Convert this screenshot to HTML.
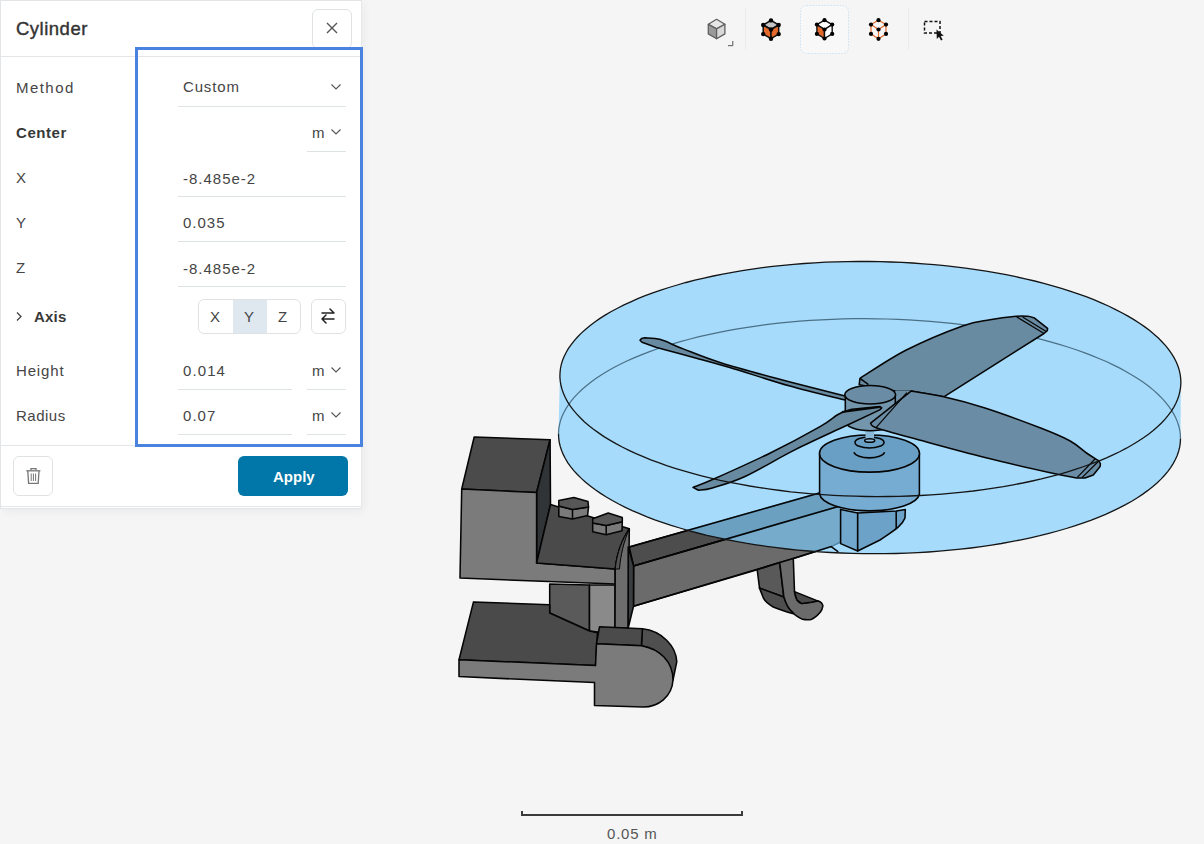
<!DOCTYPE html>
<html><head><meta charset="utf-8">
<style>
html,body{margin:0;padding:0;}
body{width:1204px;height:844px;overflow:hidden;position:relative;background:#f5f5f5;font-family:"Liberation Sans",sans-serif;}
.a{position:absolute;}
.t{position:absolute;white-space:nowrap;line-height:20px;font-size:15px;color:#454545;letter-spacing:0.85px;}
.b{font-weight:700;color:#383838;letter-spacing:0.2px;}
.ul{position:absolute;height:1px;background:#dde2e5;}
.chev{position:absolute;width:10px;height:6px;}
#panel{position:absolute;left:0;top:0;width:360px;height:507px;background:#fff;border:1px solid #e1e5e8;border-right:none;box-shadow:3px 3px 8px rgba(0,0,0,0.045);}
</style></head>
<body>
<svg class="a" style="left:0;top:0" width="1204" height="844" viewBox="0 0 1204 844">
<g stroke="#050505" stroke-width="1.55" stroke-linejoin="round">
<!-- upper L block -->
<polygon points="474.2,437 550.1,439.7 536.6,492.5 461.7,489" fill="#4b4b4b"/>
<polygon points="550.1,439.7 550.5,504.5 536.6,563 536.6,492.5" fill="#303437"/>
<polygon points="461.7,489 536.6,492.5 536.6,563 615.2,569 615.2,584.1 460,578.1" fill="#7b7b7b"/>
<path d="M550.5,504.5 L629.3,528.7 C622,540 617,552 615.2,569 L536.6,563 Z" fill="#4a4a4a"/>
<!-- bolts -->
<polygon points="558.8,506 558.8,516.6 572.5,519 587.6,515.6 588.5,507 572.5,509.5" fill="#7a7a7a"/>
<polygon points="558.8,500.5 573.9,497.5 588,501.5 588.5,507 572.5,509.5 558.8,506" fill="#575757"/>
<line x1="572.5" y1="509.5" x2="572.5" y2="519"/>
<polygon points="592.7,523 592.7,531.8 606.2,534.8 622,530.7 622.3,521.7 606.2,525.5" fill="#7a7a7a"/>
<polygon points="592.7,518.7 608.2,513 622.3,517.6 622.3,521.7 606.2,525.5 592.7,523" fill="#575757"/>
<line x1="606.2" y1="525.5" x2="606.2" y2="534.8"/>
<!-- vertical post under upper block -->
<polygon points="549.7,584 589.5,585 589.5,631 549.7,613" fill="#5a5a5a"/>
<polygon points="589.5,585 615,585 615,628 597.5,632 589.5,631" fill="#8a8a8a"/>
<!-- tall post to hinge -->
<path d="M629.3,528.7 L628.2,628 L615,628 L615.2,569 C617,552 622,540 629.3,528.7 Z" fill="#6d6d6d"/>
<path d="M629.3,528.7 C622,540 617,552 615.2,569 L619.5,569 C620.5,555 624,541 629.3,528.7 Z" fill="#545454" stroke-width="1"/>
<!-- lower plate -->
<polygon points="473.5,601.9 549.7,604.8 549.7,613 589.5,631 597.5,632.8 595.5,665.6 459,659.7" fill="#4a4a4a"/>
<!-- hinge -->
<path d="M642.4,628.8 C662,631 676,646 676.8,661.7 L673,680 C672,664 660,648 641.4,645.7 Z" fill="#4f4f4f"/>
<polygon points="599.5,626.8 642.4,628.8 641.4,645.7 596.5,643.7" fill="#4b4b4b"/>
<path d="M596.5,643.7 L641.4,645.7 C660,649 673,662 673,680 C672,697 658,707 643.3,707.1 L594.5,705.5 L594.5,682.6 L459,676.6 L459,659.7 L595.5,665.6 Z" fill="#7b7b7b"/>
<!-- horizontal arm -->
<polygon points="629.2,547 830,490 840,506 633.6,566" fill="#4d4d4d"/>
<polygon points="633.6,566 840,506 845,540 831.2,546.6 779.2,563.1 633.5,606.3" fill="#6b6b6b"/>
<polygon points="628.2,547 633.6,566 633.5,606.3 628.2,628" fill="#3a3e40"/>
<!-- hook -->
<polygon points="757.2,569.7 779.7,562.6 783.8,597 759.5,588.1" fill="#595959"/>
<path d="M759.5,588.1 L783.8,597 C786,604 790,610 794.5,614.1 C787,612 780,610 773.2,607 C768,604 765,601 763.7,598.7 Z" fill="#4e4e4e"/>
<path d="M779.7,562.6 L793.3,558.4 L794.5,591.6 C795,596 796,598 796.9,599.9 C798,602 800,603 801.6,603.5 L811.1,602.3 C814,601.5 816,601 818.2,601.1 C821,602 822.5,604 822.9,605.8 C822.5,608 822,610 820.6,611.8 C818,615 815,618 811.1,619.5 C808,620 804,619.5 801.6,618.9 C798,617 795,615 793.3,612.9 C790,610 788.5,608 787.4,605.8 C785.5,602 784.5,599 783.8,596.4 Z" fill="#6b6b6b"/>
<path d="M794.5,591.6 L818.2,601.1 L811.1,602.3 L801.6,603.5 L796.9,599.9 Z" fill="#4a4a4a"/>
</g>
<!-- cylinder translucent fill -->
<path d="M559.9,375.2 560.2,371.1 560.8,366.9 561.8,362.8 563.2,358.7 565.0,354.6 567.2,350.6 569.7,346.6 572.6,342.6 575.9,338.7 579.6,334.8 583.6,331.0 588.0,327.2 592.7,323.6 597.8,319.9 603.2,316.4 608.9,312.9 615.0,309.5 621.4,306.2 628.1,303.0 635.1,299.9 642.4,296.9 649.9,294.0 657.8,291.1 665.9,288.4 674.3,285.9 682.9,283.4 691.7,281.0 700.8,278.8 710.1,276.7 719.6,274.7 729.3,272.9 739.1,271.1 749.1,269.6 759.3,268.1 769.6,266.8 780.0,265.6 790.5,264.6 801.2,263.7 811.9,263.0 822.7,262.4 833.6,261.9 844.5,261.6 855.4,261.5 866.4,261.5 877.3,261.6 888.3,261.9 899.2,262.3 910.1,262.9 920.9,263.6 931.7,264.4 942.4,265.5 953.0,266.6 963.5,267.9 973.9,269.3 984.2,270.9 994.3,272.6 1004.3,274.4 1014.1,276.3 1023.7,278.4 1033.1,280.6 1042.4,283.0 1051.4,285.4 1060.2,288.0 1068.7,290.7 1077.0,293.5 1085.1,296.4 1092.9,299.4 1100.4,302.5 1107.6,305.7 1114.5,308.9 1121.1,312.3 1127.4,315.8 1133.4,319.3 1139.1,322.9 1144.4,326.6 1149.4,330.4 1154.0,334.2 1158.3,338.0 1162.2,341.9 1165.8,345.9 1169.0,349.9 1171.8,353.9 1174.2,358.0 1176.3,362.1 1178.0,366.2 1179.3,370.4 1180.2,374.5 1180.7,378.6 1180.9,382.8 L1180.5,438.6 1180.3,442.8 1179.7,446.9 1178.7,451.0 1177.3,455.2 1175.5,459.2 1173.3,463.3 1170.8,467.3 1167.9,471.3 1164.6,475.2 1161.0,479.1 1157.0,482.9 1152.6,486.7 1147.9,490.4 1142.8,494.1 1137.4,497.7 1131.7,501.2 1125.6,504.6 1119.3,507.9 1112.6,511.1 1105.6,514.3 1098.3,517.3 1090.7,520.3 1082.8,523.1 1074.7,525.9 1066.3,528.5 1057.7,531.0 1048.9,533.4 1039.8,535.7 1030.5,537.8 1021.0,539.8 1011.3,541.7 1001.5,543.5 991.5,545.1 981.3,546.6 971.0,548.0 960.5,549.2 950.0,550.2 939.3,551.2 928.6,552.0 917.8,552.6 906.9,553.1 896.0,553.5 885.0,553.7 874.1,553.7 863.1,553.6 852.1,553.4 841.2,553.0 830.3,552.5 819.4,551.8 808.6,551.0 797.9,550.1 787.2,549.0 776.7,547.7 766.3,546.3 756.0,544.8 745.8,543.2 735.9,541.4 726.0,539.5 716.4,537.4 706.9,535.3 697.7,533.0 688.6,530.6 679.8,528.0 671.2,525.4 662.9,522.6 654.8,519.8 647.0,516.8 639.5,513.7 632.2,510.6 625.3,507.3 618.7,504.0 612.3,500.5 606.3,497.0 600.6,493.4 595.3,489.8 590.3,486.1 585.6,482.3 581.3,478.4 577.4,474.5 573.8,470.6 570.6,466.6 567.7,462.6 565.3,458.5 563.2,454.4 561.5,450.3 560.2,446.2 559.2,442.1 558.7,437.9 558.5,433.8 Z" fill="#7bcdfe" fill-opacity="0.655" stroke="none"/>
<!-- arm edges redrawn -->
<g stroke="#050505" stroke-width="1.55" fill="none">
<path d="M629.2,547 L830,490 M633.6,566 L840,506 M633.5,606.3 L779.7,562.6 M793.3,558.4 L831.2,546.6 L838.3,551.9"/>
</g>
<!-- back half of bottom ellipse -->
<path d="M558.5,433.8 558.7,429.6 559.3,425.5 560.3,421.4 561.7,417.2 563.5,413.2 565.7,409.1 568.2,405.1 571.1,401.1 574.4,397.2 578.0,393.3 582.0,389.5 586.4,385.7 591.1,382.0 596.2,378.3 601.6,374.7 607.3,371.2 613.4,367.8 619.7,364.5 626.4,361.3 633.4,358.1 640.7,355.1 648.3,352.1 656.2,349.3 664.3,346.5 672.7,343.9 681.3,341.4 690.1,339.0 699.2,336.7 708.5,334.6 718.0,332.6 727.7,330.7 737.5,328.9 747.5,327.3 757.7,325.8 768.0,324.4 778.5,323.2 789.0,322.2 799.7,321.2 810.4,320.4 821.2,319.8 832.1,319.3 843.0,318.9 854.0,318.7 864.9,318.7 875.9,318.8 886.9,319.0 897.8,319.4 908.7,319.9 919.6,320.6 930.4,321.4 941.1,322.3 951.8,323.4 962.3,324.7 972.7,326.1 983.0,327.6 993.2,329.2 1003.1,331.0 1013.0,332.9 1022.6,335.0 1032.1,337.1 1041.3,339.4 1050.4,341.8 1059.2,344.4 1067.8,347.0 1076.1,349.8 1084.2,352.6 1092.0,355.6 1099.5,358.7 1106.8,361.8 1113.7,365.1 1120.3,368.4 1126.7,371.9 1132.7,375.4 1138.4,379.0 1143.7,382.6 1148.7,386.3 1153.4,390.1 1157.7,394.0 1161.6,397.9 1165.2,401.8 1168.4,405.8 1171.3,409.8 1173.7,413.9 1175.8,418.0 1177.5,422.1 1178.8,426.2 1179.8,430.3 1180.3,434.5 1180.5,438.6" fill="none" stroke="#4b7086" stroke-width="1.2"/>
<g stroke="#050505" stroke-width="1.55" stroke-linejoin="round">
<!-- motor mount -->
<polygon points="840.6,509.6 857.7,512.9 857.7,551 840.6,543.6" fill="#72a7cd"/>
<path d="M857.7,512.9 L896.2,511 L905.3,509.6 L905,518 C902,526 893,531 880,540 L857.7,551 Z" fill="#6da2c8"/>
<line x1="896.2" y1="511" x2="896.2" y2="528.6"/>
<!-- motor -->
<path d="M819.6,453.5 L819.6,494 A50,18 0 0 0 919.4,494 L919.4,453.5 Z" fill="#77acd2"/>
<ellipse cx="869.5" cy="453.5" rx="50" ry="18.6" fill="#6a9fc5"/>
<ellipse cx="869.5" cy="442.4" rx="14.5" ry="5.5" fill="#6a9fc5"/>
<path d="M853.9,452.3 A15.5,6.5 0 0 0 884.6,452.3" fill="none"/>
<rect x="865.5" y="426" width="8.5" height="15" fill="#8ab8d8" stroke="none"/>
<ellipse cx="869.7" cy="440.5" rx="5" ry="1.8" fill="#8ab8d8"/>
<!-- top-left blade -->
<path d="M645,337.8 C647.6,338.1 654.2,337.8 660.6,339.6 C667.0,341.5 672.8,344.9 683.2,348.9 C693.6,352.9 705.2,358.0 723.0,363.5 C740.8,369.0 778.8,379.0 790.0,382.1 L846,396.3 L846,400.3 C836.7,397.9 809.4,391.6 790.0,386.1 C770.6,380.6 745.3,372.1 729.7,367.5 C714.1,362.9 708.6,361.5 696.4,358.2 C684.2,354.9 663.2,349.4 656.6,347.6 L642,342.3 L640,340.3 L641.5,338.6 Z" fill="#678aa1"/>
<!-- top-right blade -->
<path d="M860,378.3 C867.7,373.6 889.2,358.7 906.3,350.0 C923.4,341.3 948.6,330.9 962.6,325.9 C976.6,320.9 981.1,321.4 990.0,319.8 C998.9,318.2 1009.9,316.9 1016.2,316.3 C1022.5,315.7 1024.8,316.1 1027.8,316.3 C1030.8,316.6 1033.1,317.6 1034.2,317.8 L1047.6,328.3 L1047.3,330.6 L1044,333.5 L943.8,396.8 L911.1,391.1 L895.5,391.1 C889.5,390.0 865.2,385.8 859.2,384.7 Z" fill="#688ba2"/>
<path d="M1016.2,316.6 L1044,333.5 M1022.6,316.9 L1045.8,331.2" fill="none" stroke-width="1.2"/>
<path d="M860,378.3 L868.5,384.7" fill="none"/>
<!-- hub -->
<polygon points="895.3,390.5 911.1,390.5 895.3,406" fill="#6d8fa6" stroke="none"/>
<path d="M845.3,394.7 L845.3,421.5 A25,9.3 0 0 0 895.3,421.5 L895.3,394.7 Z" fill="#7396ad"/>
<ellipse cx="870.2" cy="394.7" rx="25.4" ry="9.2" fill="#6a8da5"/>
<!-- bottom-left blade -->
<path d="M693,487.4 C696.6,485.9 702.1,484.2 714.9,478.5 C727.7,472.8 752.3,461.8 769.8,453.2 C787.3,444.6 808.6,433.1 820.0,426.6 C831.4,420.2 832.7,417.4 838.0,414.5 C843.3,411.6 849.7,410.1 852.0,409.2 L879.7,406.4 L881.7,407.9 L879.7,409.9 C874.1,412.5 859.9,419.1 845.8,425.8 C831.6,432.5 811.6,441.4 794.8,449.9 C778.0,458.3 758.7,470.2 745.0,476.5 C731.3,482.8 720.1,485.6 712.4,487.9 C704.6,490.2 700.8,489.8 698.5,490.2 Z" fill="#678aa1"/>
<path d="M841.8,411.9 L879.7,407" fill="none" stroke-width="2"/>
<!-- bottom-right blade -->
<path d="M911.1,391.1 C916.5,392.1 931.5,394.0 943.8,396.8 C956.1,399.6 968.8,402.8 985.0,408.0 C1001.2,413.2 1027.1,422.8 1041.3,428.3 C1055.5,433.8 1062.7,436.9 1070.2,441.0 C1077.7,445.1 1081.8,449.7 1086.5,453.0 C1091.2,456.3 1096.6,459.4 1098.6,460.7 L1100.4,463.7 L1100.1,466.6 L1093.3,474.9 L1085,477.9 L1076.7,477.9 C1072.7,477.1 1067.9,476.7 1052.6,473.3 C1037.3,469.9 1007.5,463.2 985.0,457.6 C962.5,452.0 935.5,444.5 917.5,439.6 C899.5,434.7 884.8,430.9 877.0,428.1 C869.2,425.4 871.7,423.9 870.6,423.1 Z" fill="#6a8ca4"/>
<path d="M1095,459 L1077.3,477.3 M1098.6,461.3 L1082,477.6" fill="none" stroke-width="1.2"/>
<path d="M906.9,392.6 L875.6,428.1" fill="none" stroke-width="1.2"/>
</g>
<!-- cylinder outlines -->
<g fill="none" stroke="#151515" stroke-width="1.3">
<path d="M1180.9,382.8 1180.6,386.9 1180.0,391.0 1179.0,395.1 1177.6,399.2 1175.9,403.3 1173.7,407.3 1171.2,411.3 1168.3,415.2 1165.1,419.1 1161.5,423.0 1157.5,426.8 1153.2,430.5 1148.5,434.2 1143.5,437.8 1138.1,441.3 1132.4,444.8 1126.4,448.2 1120.1,451.5 1113.5,454.7 1106.5,457.8 1099.3,460.8 1091.8,463.7 1084.0,466.5 1076.0,469.2 1067.7,471.8 1059.2,474.3 1050.4,476.6 1041.4,478.9 1032.2,481.0 1022.8,483.0 1013.2,484.8 1003.5,486.6 993.5,488.2 983.5,489.6 973.2,491.0 962.9,492.1 952.4,493.2 941.9,494.1 931.2,494.9 920.5,495.5 909.7,496.0 898.9,496.3 888.0,496.5 877.1,496.6 866.2,496.5 855.3,496.2 844.5,495.8 833.6,495.3 822.8,494.6 812.1,493.8 801.4,492.8 790.8,491.8 780.4,490.5 770.0,489.1 759.7,487.6 749.6,486.0 739.7,484.2 729.9,482.3 720.2,480.3 710.8,478.1 701.5,475.8 692.5,473.4 683.7,470.9 675.1,468.3 666.7,465.6 658.6,462.7 650.8,459.8 643.2,456.7 636.0,453.6 629.0,450.3 622.2,447.0 615.9,443.6 609.8,440.1 604.0,436.6 598.6,432.9 593.5,429.2 588.7,425.5 584.3,421.7 580.3,417.8 576.6,413.9 573.2,409.9 570.2,405.9 567.6,401.9 565.4,397.8 563.6,393.7 562.1,389.6 561.0,385.5 560.3,381.4 559.9,377.3 560.0,373.1 560.4,369.0 561.2,364.9 562.4,360.8 564.0,356.8 566.0,352.7 568.3,348.7 571.0,344.8 574.1,340.8 577.5,337.0 581.3,333.1 585.4,329.4 589.9,325.7 594.8,322.0 600.0,318.4 605.5,314.9 611.3,311.5 617.5,308.2 624.0,304.9 630.8,301.8 637.8,298.7 645.2,295.7 652.8,292.9 660.8,290.1 668.9,287.5 677.3,285.0 686.0,282.5 694.9,280.2 704.0,278.1 713.3,276.0 722.8,274.1 732.4,272.3 742.3,270.6 752.3,269.1 762.4,267.7 772.7,266.4 783.1,265.3 793.6,264.3 804.2,263.5 814.9,262.8 825.7,262.2 836.5,261.8 847.3,261.6 858.2,261.5 869.1,261.5 880.0,261.6 890.9,262.0 901.8,262.4 912.6,263.0 923.3,263.8 934.0,264.7 944.7,265.7 955.2,266.8 965.6,268.2 975.9,269.6 986.1,271.2 996.2,272.9 1006.1,274.7 1015.8,276.7 1025.3,278.8 1034.7,281.0 1043.8,283.3 1052.7,285.8 1061.4,288.4 1069.9,291.1 1078.1,293.8 1086.1,296.7 1093.8,299.7 1101.2,302.8 1108.4,306.0 1115.2,309.3 1121.8,312.7 1128.0,316.1 1133.9,319.6 1139.5,323.2 1144.8,326.9 1149.7,330.6 1154.3,334.4 1158.6,338.3 1162.4,342.2 1166.0,346.1 1169.1,350.1 1171.9,354.1 1174.3,358.1 1176.4,362.2 1178.0,366.3 1179.3,370.4 1180.2,374.5 1180.7,378.7 1180.9,382.8 Z"/>
<path d="M1180.5,438.6 1180.3,442.8 1179.7,446.9 1178.7,451.0 1177.3,455.2 1175.5,459.2 1173.3,463.3 1170.8,467.3 1167.9,471.3 1164.6,475.2 1161.0,479.1 1157.0,482.9 1152.6,486.7 1147.9,490.4 1142.8,494.1 1137.4,497.7 1131.7,501.2 1125.6,504.6 1119.3,507.9 1112.6,511.1 1105.6,514.3 1098.3,517.3 1090.7,520.3 1082.8,523.1 1074.7,525.9 1066.3,528.5 1057.7,531.0 1048.9,533.4 1039.8,535.7 1030.5,537.8 1021.0,539.8 1011.3,541.7 1001.5,543.5 991.5,545.1 981.3,546.6 971.0,548.0 960.5,549.2 950.0,550.2 939.3,551.2 928.6,552.0 917.8,552.6 906.9,553.1 896.0,553.5 885.0,553.7 874.1,553.7 863.1,553.6 852.1,553.4 841.2,553.0 830.3,552.5 819.4,551.8 808.6,551.0 797.9,550.1 787.2,549.0 776.7,547.7 766.3,546.3 756.0,544.8 745.8,543.2 735.9,541.4 726.0,539.5 716.4,537.4 706.9,535.3 697.7,533.0 688.6,530.6 679.8,528.0 671.2,525.4 662.9,522.6 654.8,519.8 647.0,516.8 639.5,513.7 632.2,510.6 625.3,507.3 618.7,504.0 612.3,500.5 606.3,497.0 600.6,493.4 595.3,489.8 590.3,486.1 585.6,482.3 581.3,478.4 577.4,474.5 573.8,470.6 570.6,466.6 567.7,462.6 565.3,458.5 563.2,454.4 561.5,450.3 560.2,446.2 559.2,442.1 558.7,437.9 558.5,433.8"/>
</g>
</svg>

<svg class="a" style="left:0;top:0" width="1204" height="844" viewBox="0 0 1204 844">
<!-- icon1 shaded cube -->
<g stroke="#606060" stroke-width="1.3" stroke-linejoin="round">
<polygon points="716.6,19.3 724.9,24.3 716.6,28.9 708.3,24.3" fill="#e6e6e6"/>
<polygon points="708.3,24.3 716.6,28.9 716.6,38.7 708.3,33.9" fill="#9a9a9a"/>
<polygon points="716.6,28.9 724.9,24.3 724.9,33.9 716.6,38.7" fill="#d8d8d8"/>
</g>
<path d="M732.8,41 V45.7 H728" fill="none" stroke="#555" stroke-width="1"/>
<rect x="745" y="8" width="1" height="42" fill="#e9ebed"/>
<!-- icon2 solid orange -->
<g stroke="#111" stroke-width="1.5" stroke-linejoin="round">
<polygon points="771,20.4 778.7,25 771,29.5 763.2,25" fill="#c4c4c4"/>
<polygon points="763.2,25 771,29.5 771,38.7 763.2,34.1" fill="#e0692b"/>
<polygon points="771,29.5 778.7,25 778.7,34.1 771,38.7" fill="#e0692b"/>
</g>
<g fill="#000"><circle cx="771" cy="20.4" r="2.2"/><circle cx="763.2" cy="25" r="2.2"/><circle cx="778.7" cy="25" r="2.2"/><circle cx="771" cy="29.5" r="2.2"/><circle cx="763.2" cy="34.1" r="2.2"/><circle cx="778.7" cy="34.1" r="2.2"/><circle cx="771" cy="38.7" r="2.2"/></g>
<!-- active button -->
<rect x="800.5" y="5.5" width="48" height="48" rx="6" fill="#f8f8f8" stroke="#c9e2f5" stroke-width="1" stroke-dasharray="1.5 1.5"/>
<!-- icon3 -->
<g stroke="#111" stroke-width="1.4" stroke-linejoin="round">
<polygon points="824.5,20.2 832.2,24.6 824.5,29.5 816.9,24.6" fill="#fff"/>
<polygon points="816.9,24.6 824.5,29.5 824.5,38.5 816.9,33.9" fill="#e0692b"/>
<polygon points="824.5,29.5 832.2,24.6 832.2,33.9 824.5,38.5" fill="#fff"/>
</g>
<g fill="#000"><circle cx="824.5" cy="20.2" r="2.1"/><circle cx="816.9" cy="24.6" r="2.1"/><circle cx="832.2" cy="24.6" r="2.1"/><circle cx="824.5" cy="29.5" r="2.1"/><circle cx="816.9" cy="33.9" r="2.1"/><circle cx="832.2" cy="33.9" r="2.1"/><circle cx="824.5" cy="38.5" r="2.1"/></g>
<!-- icon4 wire -->
<g stroke="#e0692b" stroke-width="1.2" fill="none" stroke-linejoin="round">
<polygon points="878.5,20.2 886,24.6 886,33.9 878.5,38.8 871,33.9 871,24.6"/>
<path d="M871,24.6 L878.5,29.5 L886,24.6 M878.5,29.5 V38.8"/>
</g>
<g fill="#000"><circle cx="878.5" cy="20.2" r="2.1"/><circle cx="871" cy="24.6" r="2.1"/><circle cx="886" cy="24.6" r="2.1"/><circle cx="878.5" cy="29.5" r="2.1"/><circle cx="871" cy="33.9" r="2.1"/><circle cx="886" cy="33.9" r="2.1"/><circle cx="878.5" cy="38.8" r="2.1"/></g>
<rect x="908" y="8" width="1" height="42" fill="#e9ebed"/>
<!-- box select -->
<rect x="924.5" y="21.5" width="15.5" height="11.5" fill="none" stroke="#111" stroke-width="1.5" stroke-dasharray="3 2"/>
<path d="M936.5,29.5 L936.8,39 L939,36.8 L941,40.5 L942.6,39.7 L940.7,36 L943.8,35.7 Z" fill="#111"/>
<!-- scale bar -->
<path d="M522,811 V815 H742 V811" fill="none" stroke="#3a3a3a" stroke-width="2"/>

</svg>
<div class="t" style="left:607px;top:823.5px;color:#555;letter-spacing:0.8px">0.05 m</div>

<div id="panel"></div>
<div class="a" style="left:361px;top:0;width:1px;height:509px;background:#e6e9eb"></div>
<!-- header -->
<div class="t" style="left:16px;top:16.8px;font-size:18.5px;line-height:24px;color:#333;letter-spacing:0.5px;-webkit-text-stroke:0.4px #333">Cylinder</div>
<div class="a" style="left:312px;top:9px;width:38px;height:38px;border:1px solid #dfe3e6;border-radius:6px;background:#fff"></div>
<svg class="a" style="left:326px;top:22px" width="12" height="12" viewBox="0 0 12 12"><path d="M1 1L11 11M11 1L1 11" stroke="#555" stroke-width="1.4"/></svg>
<div class="ul" style="left:1px;top:56px;width:360px;background:#e3e7ea"></div>

<!-- rows -->
<div class="t" style="left:16px;top:77.7px;letter-spacing:1.45px">Method</div>
<div class="t" style="left:183px;top:77.1px">Custom</div>
<svg class="chev" style="left:331px;top:84px" viewBox="0 0 10 6"><path d="M0.5 0.5L5 5L9.5 0.5" fill="none" stroke="#555" stroke-width="1.1"/></svg>
<div class="ul" style="left:178px;top:106px;width:168px"></div>

<div class="t b" style="left:16px;top:122.9px;letter-spacing:0.55px">Center</div>
<div class="t" style="left:312px;top:122.9px;letter-spacing:0">m</div>
<svg class="chev" style="left:331px;top:129px" viewBox="0 0 10 6"><path d="M0.5 0.5L5 5L9.5 0.5" fill="none" stroke="#555" stroke-width="1.1"/></svg>
<div class="ul" style="left:307px;top:151px;width:39px"></div>

<div class="t" style="left:16px;top:167.9px">X</div>
<div class="t" style="left:183px;top:169px;letter-spacing:1.0px">-8.485e-2</div>
<div class="ul" style="left:178px;top:196px;width:168px"></div>

<div class="t" style="left:16px;top:212.9px">Y</div>
<div class="t" style="left:183px;top:213.4px;letter-spacing:1.0px">0.035</div>
<div class="ul" style="left:178px;top:241px;width:168px"></div>

<div class="t" style="left:16px;top:257.9px">Z</div>
<div class="t" style="left:183px;top:258.8px;letter-spacing:1.0px">-8.485e-2</div>
<div class="ul" style="left:178px;top:286px;width:168px"></div>

<svg class="a" style="left:15px;top:311px" width="8" height="11" viewBox="0 0 8 11"><path d="M2 1.5L6 5.5L2 9.5" fill="none" stroke="#444" stroke-width="1.3"/></svg>
<div class="t b" style="left:34px;top:306.5px">Axis</div>
<div class="a" style="left:198px;top:299px;width:101px;height:33px;border:1px solid #dfe3e6;border-radius:6px;background:#fff;overflow:hidden">
  <div class="a" style="left:34px;top:0;width:34px;height:33px;background:#dfe8ef"></div>
</div>
<div class="t" style="left:210px;top:306.7px;letter-spacing:0">X</div>
<div class="t" style="left:244px;top:306.7px;letter-spacing:0">Y</div>
<div class="t" style="left:278px;top:306.7px;letter-spacing:0">Z</div>
<div class="a" style="left:311px;top:299px;width:33px;height:33px;border:1px solid #dfe3e6;border-radius:6px;background:#fff"></div>
<svg class="a" style="left:319px;top:306px" width="18" height="20" viewBox="0 0 18 20"><path d="M3 7H15M11 3L15 7M15 13H3M7 9L3 13M7 17L3 13" fill="none" stroke="#222" stroke-width="1.5" stroke-linecap="round"/></svg>

<div class="t" style="left:16px;top:361px">Height</div>
<div class="t" style="left:183px;top:360.8px;letter-spacing:1.1px">0.014</div>
<div class="ul" style="left:178px;top:389px;width:114px"></div>
<div class="t" style="left:312px;top:360.8px;letter-spacing:0">m</div>
<svg class="chev" style="left:331px;top:367px" viewBox="0 0 10 6"><path d="M0.5 0.5L5 5L9.5 0.5" fill="none" stroke="#555" stroke-width="1.1"/></svg>
<div class="ul" style="left:307px;top:389px;width:39px"></div>

<div class="t" style="left:16px;top:405.6px;letter-spacing:0.5px">Radius</div>
<div class="t" style="left:183px;top:405.7px;letter-spacing:1.05px">0.07</div>
<div class="ul" style="left:178px;top:434px;width:114px"></div>
<div class="t" style="left:312px;top:405.7px;letter-spacing:0">m</div>
<svg class="chev" style="left:331px;top:412px" viewBox="0 0 10 6"><path d="M0.5 0.5L5 5L9.5 0.5" fill="none" stroke="#555" stroke-width="1.1"/></svg>
<div class="ul" style="left:307px;top:434px;width:39px"></div>

<!-- footer -->
<div class="ul" style="left:1px;top:445px;width:360px;background:#e3e7ea"></div>
<div class="a" style="left:13px;top:456px;width:38px;height:38px;border:1px solid #dfe3e6;border-radius:6px;background:#fff"></div>
<svg class="a" style="left:0;top:440px" width="60" height="60" viewBox="0 440 60 60"><!-- trash -->
<g fill="none" stroke="#777" stroke-width="1.3">
<path d="M26.3,470.8 H40.4"/>
<path d="M31,470.5 V468.6 H36 V470.5"/>
<path d="M27.8,471 L28.6,483.4 H38.2 L39,471"/>
<path d="M31.2,473.5 V481 M33.4,473.5 V481 M35.6,473.5 V481" stroke-width="1"/>
</g></svg>
<div class="a" style="left:238px;top:456px;width:110px;height:40px;border-radius:6px;background:#0077a8"></div>
<div class="t b" style="left:273px;top:466.6px;color:#fff;letter-spacing:0;font-size:15px">Apply</div>
<div class="ul" style="left:1px;top:506px;width:360px;background:#e3e7ea"></div>

<!-- highlight box -->
<div class="a" style="left:135px;top:47px;width:222px;height:394px;border:3px solid #4a82e0"></div>

</body></html>
